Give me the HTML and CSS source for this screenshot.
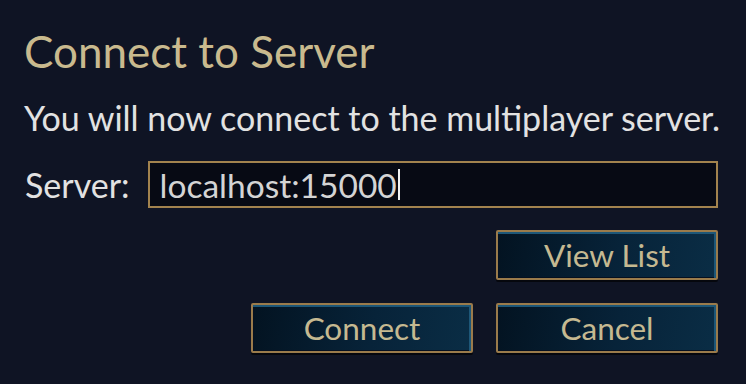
FILE: index.html
```html
<!DOCTYPE html>
<html lang="en">
<head>
    <meta charset="UTF-8">
    <title>Connect to Server</title>
    <link rel="stylesheet" href="styles.css">
</head>
<body>
    <div class="dialog">
        <h1 class="title">Connect to Server</h1>
        <p class="message">You will now connect to the multiplayer server.</p>
        <div class="field">
            <label class="label" for="server">Server:</label>
            <div class="input"><span id="server">localhost:15000</span><span class="caret"></span></div>
        </div>
        <div class="buttons">
            <button class="btn">View List</button>
        </div>
        <div class="buttons last">
            <button class="btn">Connect</button>
            <button class="btn">Cancel</button>
        </div>
    </div>
</body>
</html>
```

FILE: styles.css
```css
body {
    margin: 0;
    padding: 0;
    background-color: #0f1424;
    font-family: Lato, "DejaVu Sans", sans-serif;
    color: #e2e2e2;
}
.dialog {
    width: 746px;
    height: 384px;
    box-sizing: border-box;
    padding: 27px 28px 0 24px;
    display: flex;
    flex-direction: column;
}
.title {
    margin: 0;
    font-size: 44px;
    line-height: 48px;
    font-weight: 400;
    color: #c9ba8e;
    white-space: nowrap;
}
.message {
    margin: 23px 0 0 0;
    font-size: 34px;
    line-height: 40px;
    white-space: nowrap;
}
.field {
    margin-top: 23px;
    display: flex;
    align-items: center;
    gap: 18px;
}
.label {
    font-size: 34px;
    line-height: 40px;
    padding-left: 1px;
}
.input {
    flex: 1;
    height: 43px;
    border: 2px solid #a2834e;
    background-color: #070a14;
    display: flex;
    align-items: center;
    padding-left: 10px;
    font-size: 33.5px;
    color: #d4d4d4;
}
.caret {
    display: inline-block;
    width: 2px;
    height: 31px;
    margin-left: 1px;
    background-color: #f2f2f2;
}
.buttons {
    margin-top: 22px;
    display: flex;
    justify-content: flex-end;
    gap: 23px;
}
.buttons.last {
    margin-top: 23px;
}
.btn {
    width: 222px;
    height: 50px;
    border: 2px solid #9a7b4b;
    border-radius: 2px;
    background: linear-gradient(100deg, #031321 0%, #072339 55%, #0a2d45 100%);
    box-shadow: inset -2px 2px 0 #1d5778, inset 0 0 0 1px #051020, 0 2px 0 #05070d;
    font-family: Lato, "DejaVu Sans", sans-serif;
    font-size: 31.5px;
    color: #c5b991;
    padding: 0;
}
```
